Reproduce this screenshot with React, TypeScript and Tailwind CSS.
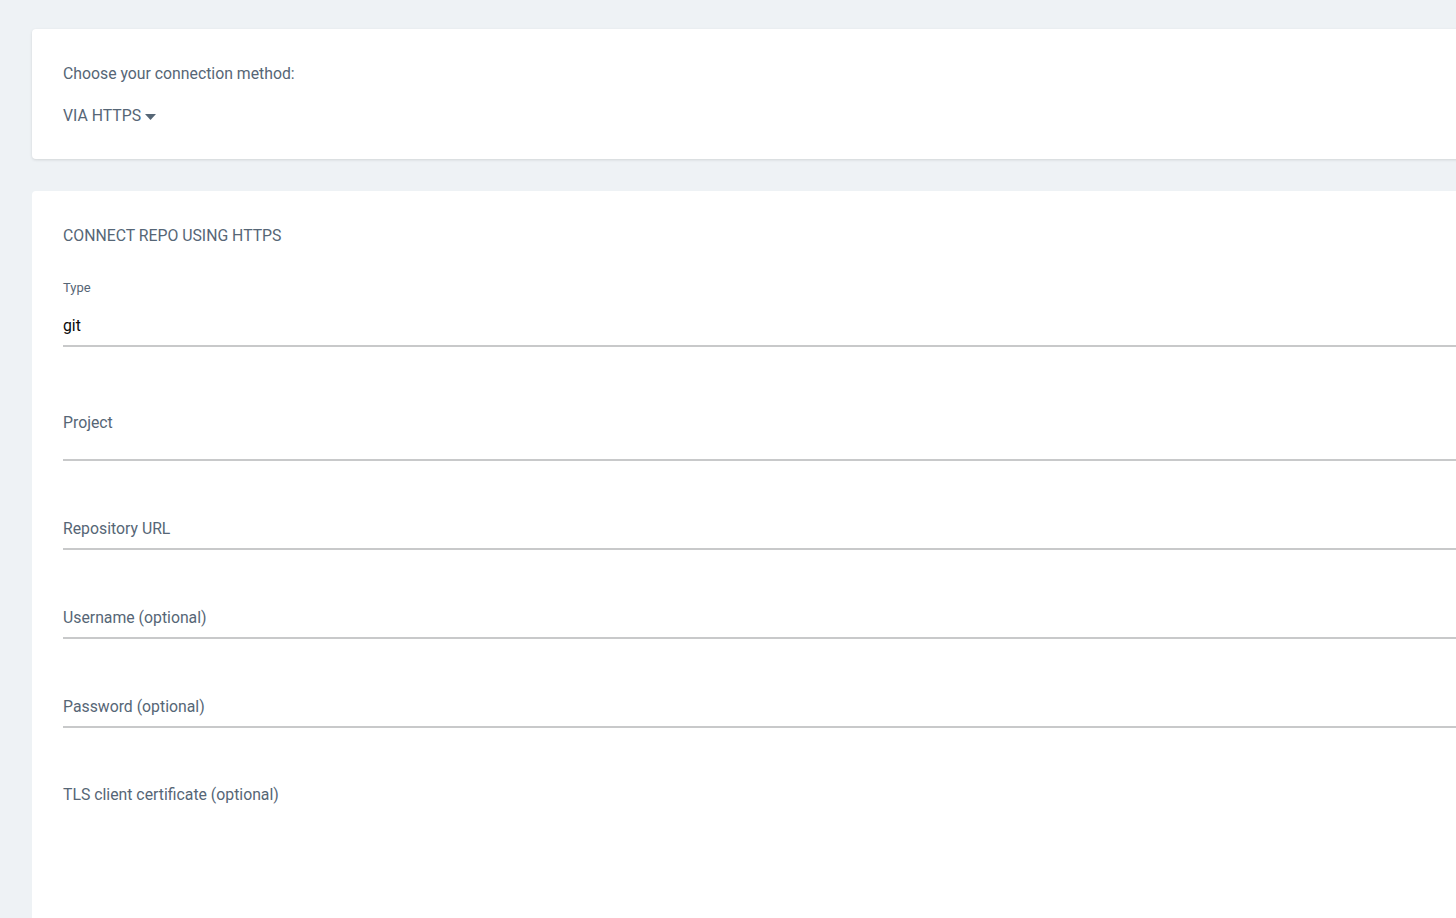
const Field = ({ label, className }: { label: string; className: string }) => {
  return (
    <div className={className}>
      <div className="text-[15.8px] leading-[22px] text-[#566676] pb-[8px] border-b-2 border-[#c8c9ca]">{label}</div>
    </div>
  );
};

const App = () => {
  return (
    <div
      className="min-h-[918px] h-[918px] overflow-hidden bg-[#eef2f5] pt-[29px] pl-8"
      style={{ fontFamily: "Roboto, 'Liberation Sans', sans-serif" }}
    >
      <div className="w-[1500px] bg-white rounded-[4px] shadow-[0_1px_3px_rgba(0,0,0,0.12)] pl-[31px] pt-[34px] pb-[32px]">
        <div className="text-[15.8px] leading-[22px] text-[#566676]">Choose your connection method:</div>
        <div className="mt-[20px] flex items-center gap-1 text-[15.8px] leading-[22px] text-[#566676]">
          <span>VIA HTTPS</span>
          <svg width="11" height="6" viewBox="0 0 11 6" className="mt-[1px]">
            <path d="M0 0 L11 0 L5.5 6 Z" fill="#566676" />
          </svg>
        </div>
      </div>

      <div className="mt-8 w-[1500px] h-[800px] bg-white rounded-[4px] pl-[31px] pt-[34px]">
        <div className="text-[15.8px] leading-[22px] text-[#566676]">CONNECT REPO USING HTTPS</div>

        <div className="mt-[33px]">
          <div className="text-[13px] leading-4 text-[#566676]">Type</div>
          <div className="mt-[19px] text-[15.8px] leading-[22px] text-[#0a0a0a] pb-[8px] border-b-2 border-[#c8c9ca]">git</div>
        </div>

        <div className="mt-[65px]">
          <div className="text-[15.8px] leading-[22px] text-[#566676] pb-[25px] border-b-2 border-[#c8c9ca]">Project</div>
        </div>

        <Field label="Repository URL" className="mt-[57px]" />
        <Field label="Username (optional)" className="mt-[57px]" />
        <Field label="Password (optional)" className="mt-[57px]" />

        <div className="mt-[56px] text-[15.8px] leading-[22px] text-[#566676]">TLS client certificate (optional)</div>
      </div>
    </div>
  );
};

export default App;
